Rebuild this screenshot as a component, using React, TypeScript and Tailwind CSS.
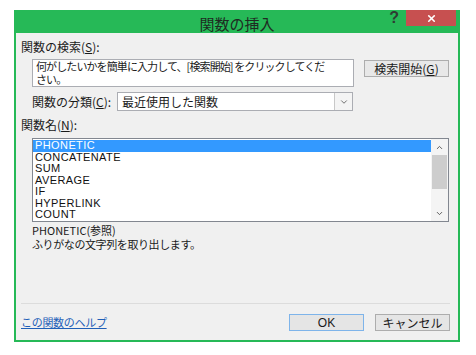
import { ChevronDown, ChevronUp, X } from 'lucide-react'

const functions = ['PHONETIC', 'CONCATENATE', 'SUM', 'AVERAGE', 'IF', 'HYPERLINK', 'COUNT']

const jp = { fontFamily: '"Noto Sans CJK JP", "Noto Sans", sans-serif' }
const latin = { fontFamily: '"Liberation Sans", "Noto Sans CJK JP", sans-serif' }

export default function App() {
  return (
    <div className="w-[476px] h-[355px] bg-white pt-[10px] pl-[14px]" style={jp}>
      <div className="w-[446px] h-[332px] bg-[#26b957] px-[2px] pb-[2px] flex flex-col">
        {/* Title bar */}
        <div className="relative h-[23px] flex items-center justify-center">
          <span className="text-[15px] leading-none text-[#1f2a22] mt-[3px]">関数の挿入</span>
          <div className="absolute right-[2px] top-0 flex items-start">
            <span className="text-[16px] leading-[16px] font-black text-[#2f3b33] mr-[7px]" style={latin}>
              ?
            </span>
            <div className="w-[50px] h-[16px] bg-[#c75050] flex items-center justify-center">
              <X className="w-[11px] h-[11px] text-white" strokeWidth={3.5} />
            </div>
          </div>
        </div>

        {/* Body */}
        <div className="flex-1 bg-[#f0f0f0] pl-[5px] pr-[8px] flex flex-col text-[#1a1a1a]">
          <div className="mt-[8px] text-[12px] leading-[12px]">
            関数の検索(<span className="underline">S</span>):
          </div>

          <div className="mt-[6px] flex items-start">
            <div className="ml-[11px] w-[322px] h-[28px] bg-white border border-[#abadb3] pl-[3px] text-[11px] leading-[13px] tracking-[-0.9px] whitespace-nowrap overflow-hidden">
              何がしたいかを簡単に入力して、[検索開始] をクリックしてくだ
              <br />
              さい。
            </div>
            <button className="ml-[10px] mt-[1px] w-[85px] h-[17px] bg-[#e8e8e8] border border-[#adadad] text-[12px] leading-none text-[#1a1a1a]">
              検索開始(<span className="underline">G</span>)
            </button>
          </div>

          <div className="mt-[5px] flex items-center h-[19px]">
            <div className="ml-[11px] w-[85px] text-[12px] leading-none">
              関数の分類(<span className="underline">C</span>):
            </div>
            <div className="w-[236px] h-[19px] bg-white border border-[#abadb3] flex items-center">
              <span className="flex-1 pl-[4px] text-[12px] leading-none">最近使用した関数</span>
              <div className="w-[18px] h-full border-l border-[#c8c8c8] bg-[#f4f4f4] flex items-center justify-center">
                <ChevronDown className="w-[10px] h-[10px] text-[#555]" strokeWidth={2} />
              </div>
            </div>
          </div>

          <div className="mt-[8px] text-[12px] leading-[12px]">
            関数名(<span className="underline">N</span>):
          </div>

          <div className="mt-[7px] ml-[11px] w-[417px] h-[84px] bg-white border border-[#828790] flex">
            <div className="flex-1 pt-[1px]" style={latin}>
              {functions.map((name, i) => (
                <div
                  key={name}
                  className={
                    i === 0
                      ? 'h-[11.5px] pl-[2px] text-[11px] leading-[11.5px] tracking-[0.4px] bg-[#3399ff] text-white'
                      : 'h-[11.5px] pl-[2px] text-[11px] leading-[11.5px] tracking-[0.4px] text-[#111]'
                  }
                >
                  {name}
                </div>
              ))}
            </div>
            <div className="w-[17px] flex flex-col items-center bg-[#f4f4f4]">
              <div className="h-[16px] flex items-center justify-center">
                <ChevronUp className="w-[9px] h-[9px] text-[#555]" strokeWidth={2.5} />
              </div>
              <div className="w-[15px] h-[34px] bg-[#cdcdcd]" />
              <div className="flex-1" />
              <div className="h-[16px] flex items-center justify-center">
                <ChevronDown className="w-[9px] h-[9px] text-[#555]" strokeWidth={2.5} />
              </div>
            </div>
          </div>

          <div className="mt-[1px] ml-[11px] text-[11px] leading-[14px]">
            <div>PHONETIC(参照)</div>
            <div className="tracking-[-0.4px]">ふりがなの文字列を取り出します。</div>
          </div>

          <div className="mt-[52px] h-px bg-[#dcdcdc]" />

          <div className="mt-[10px] h-[17px] flex items-center">
            <span className="text-[11px] leading-none text-[#1f5fb8] underline tracking-[-0.3px]">
              この関数のヘルプ
            </span>
            <button className="ml-auto w-[75px] h-[17px] bg-[#e5e5e5] border border-[#7eb4ea] text-[12px] leading-none text-[#1a1a1a]" style={latin}>
              OK
            </button>
            <button className="ml-[11px] w-[75px] h-[17px] bg-[#e5e5e5] border border-[#adadad] text-[12px] leading-none text-[#1a1a1a]">
              キャンセル
            </button>
          </div>
        </div>
      </div>
    </div>
  )
}
